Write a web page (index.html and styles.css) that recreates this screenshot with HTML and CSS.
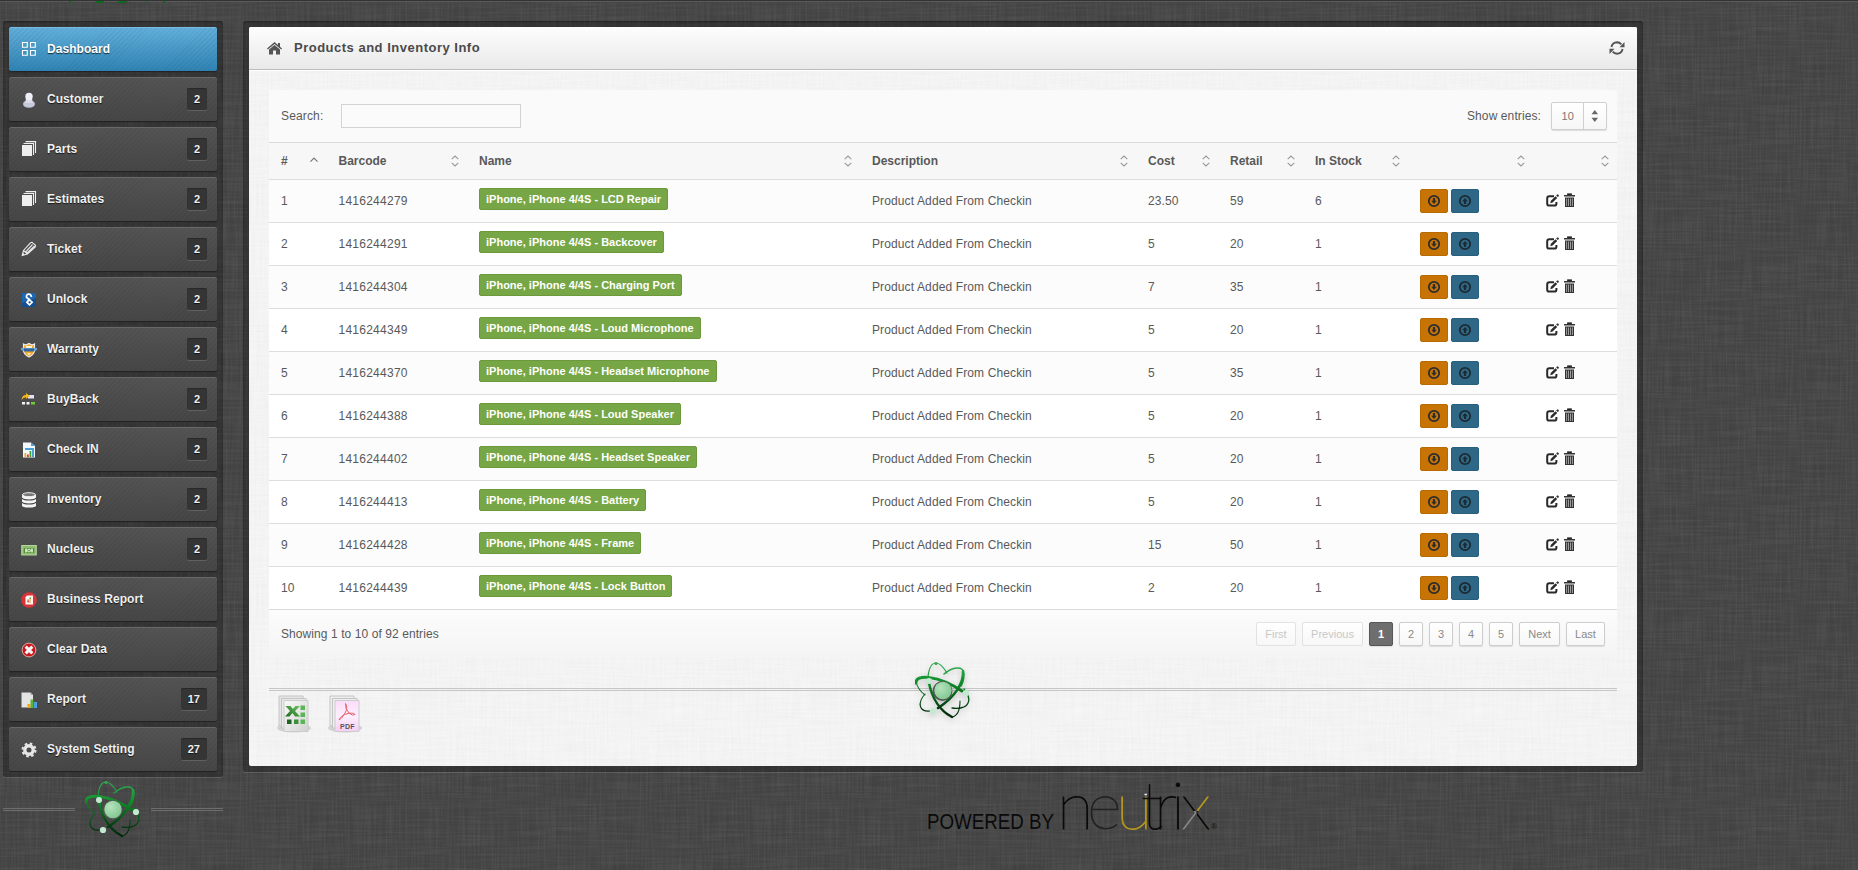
FILE: index.html
```html
<!DOCTYPE html>
<html lang="en">
<head>
<meta charset="utf-8">
<title>Products and Inventory Info</title>
<link rel="stylesheet" href="styles.css">
</head>
<body>
<svg class="defs" width="0" height="0">
  <defs>
    <linearGradient id="gTop" x1="0" y1="0" x2="0" y2="58" gradientUnits="userSpaceOnUse"><stop offset="0" stop-color="#35b25a"/><stop offset=".4" stop-color="#0c8a25"/><stop offset=".8" stop-color="#043a10"/><stop offset="1" stop-color="#02250a"/></linearGradient>
    <radialGradient id="gBall" cx=".35" cy=".35" r=".8"><stop offset="0" stop-color="#b4e3bd"/><stop offset="1" stop-color="#7cc48b"/></radialGradient>
    <linearGradient id="gPage" x1="0" y1="0" x2="1" y2="1"><stop offset="0" stop-color="#fafafa"/><stop offset="1" stop-color="#d2d2d2"/></linearGradient>
    <linearGradient id="gPink" x1="0" y1="0" x2="0" y2="1"><stop offset="0" stop-color="#fbdcfa"/><stop offset=".5" stop-color="#fdf0fd"/><stop offset="1" stop-color="#f7cdf5"/></linearGradient>
    <linearGradient id="gLeaf" x1="0" y1="1" x2="1" y2="0"><stop offset="0" stop-color="#1d6b22"/><stop offset="1" stop-color="#6cc25f"/></linearGradient>
  </defs>
  <symbol id="atom" viewBox="1 0 56 58">
    <g fill="none" stroke="url(#gTop)" stroke-linecap="round">
      <path d="M14 16C15 6 18 2 22 2c4 0 8 5 11 10" stroke-width="1.2"/>
      <path d="M30 13C38 6 50 4 50 13c0 5-1 9-3 12" stroke-width="1.4"/>
      <path d="M49 10c1 12-8 26-25 37" stroke-width="2.6"/>
      <path d="M2 22c-1-9 22-8 46 8" stroke-width="2.9"/>
      <path d="M2 20c1 7 5 11 9 14" stroke-width="1.1"/>
      <path d="M11 33c-8 9-6 18 5 17" stroke-width="1.1"/>
      <path d="M15 22c3 15 11 28 23 34" stroke-width="2.5"/>
      <path d="M38 56c5-1 8-6 8-16" stroke-width="1.1"/>
      <path d="M50 28c4 5 6 10 4 14-2 5-10 6-16 5" stroke-width="1.3"/>
    </g>
    <circle cx="28.500" cy="30" r="10" fill="#4d5550"/><circle cx="29" cy="29.500" r="8.700" fill="url(#gBall)"/>
    <circle cx="22" cy="2.500" r="1.600" fill="#3aa552"/>
    <g fill="#c3ead0"><circle cx="15" cy="20" r="3"/><circle cx="52" cy="32" r="3.100"/><circle cx="19" cy="50" r="3.100"/></g>
  </symbol>
  <symbol id="sort" viewBox="0 0 8 12"><path d="M.7 4.200 4 1l3.300 3.200M.7 7.800 4 11l3.300-3.200" fill="none" stroke="#999" stroke-width="1.100"/></symbol>
  <symbol id="asc" viewBox="0 0 8 12"><path d="M.5 6.700 4 3.200l3.500 3.500" fill="none" stroke="#777" stroke-width="1.200"/></symbol>
  <symbol id="down" viewBox="0 0 14 14"><circle cx="7" cy="7" r="5.200" fill="none" stroke="#2d2d2d" stroke-width="1.800"/><path d="M5.900 4h2.200v2.700h1.700L7 10 4.200 6.700h1.700z" fill="#2d2d2d"/></symbol>
  <symbol id="up" viewBox="0 0 14 14"><circle cx="7" cy="7" r="5.200" fill="none" stroke="#1d2a31" stroke-width="1.800"/><path d="M5.900 10h2.200V7.300h1.700L7 4 4.200 7.300h1.700z" fill="#1d2a31"/></symbol>
  <symbol id="edit" viewBox="0 0 13 13"><path d="M8 2.200H3.400Q1.200 2.200 1.200 4.400v5q0 2.200 2.200 2.200h4.800q2.200 0 2.200-2.200V8" fill="none" stroke="#2a2a2a" stroke-width="2"/><path d="M4.300 9.200l.6-2.400 4.600-4.600 1.700 1.700-4.600 4.600z" fill="#2a2a2a"/><path d="M10.200 1.500l.9-.9q.5-.4 1 0l.6.6q.4.500 0 1l-.9.900z" fill="#2a2a2a"/></symbol>
  <symbol id="trash" viewBox="0 0 11 14"><path d="M0 2h11v1.400H0zM3.200 2V.5h4.600V2M1 4.500h9V14H1z" fill="#333"/><path d="M3.200 1.200h4.600" stroke="#222"/><path d="M2.600 5.500V13M4.500 5.500V13M6.500 5.500V13M8.400 5.500V13" stroke="#aaa" stroke-width=".9"/></symbol>
  <symbol id="stack" viewBox="0 0 16 16"><path d="M1 4h10v11H1z" fill="#eee"/><path d="M2.500 2.500h10V14M4.500.6h10V12" fill="none" stroke="#eee" stroke-width="1.100"/></symbol>
</svg>

<div class="topbar">
  <svg class="topbar-scrap" width="110" height="3"><path d="M9 0h2v2H9zM35 0h9v2h-7zM59 0h9l-4 2h-8zM86 0h1v1h-1zM103 0h2v2h-2z" fill="#0b6b1d"/></svg>
</div>

<div class="layout">
  <aside class="side">
    <nav class="menu">
      <a class="item active"><svg class="ico" viewBox="0 0 16 16"><path d="M1.500 1.500h4.800v4.800H1.500zM9.500 1.500h4.800v4.800H9.500zM1.500 9.500h4.800v4.800H1.500zM9.500 9.500h4.800v4.800H9.500z" fill="none" stroke="#fff" stroke-width="1.100"/></svg><span>Dashboard</span></a>
      <a class="item"><svg class="ico low" viewBox="0 0 16 16"><ellipse cx="8" cy="12" rx="6" ry="3.800" fill="#c6c8dc"/><path d="M4.500 11 5 4q3-6 6 0l.5 7z" fill="#dcdde8"/><circle cx="8" cy="4.500" r="3.700" fill="#eeeef4"/></svg><span>Customer</span><b class="count">2</b></a>
      <a class="item"><svg class="ico"><use href="#stack"/></svg><span>Parts</span><b class="count">2</b></a>
      <a class="item"><svg class="ico"><use href="#stack"/></svg><span>Estimates</span><b class="count">2</b></a>
      <a class="item"><svg class="ico" viewBox="0 0 16 16"><path d="M1.200 14.500 2.500 9.500 9.500 1.800 11 1.300 14.500 4.300 14.300 6 6.500 13zM4 11.500 11.500 3.500M5 12.800 13.500 5M2.600 9.500 6.400 13" fill="none" stroke="#e6e6e6" stroke-width="1.100"/><path d="m1.200 14.500.7-2.700 2 2z" fill="#eee"/></svg><span>Ticket</span><b class="count">2</b></a>
      <a class="item"><svg class="ico low" viewBox="0 0 16 16"><path d="M1 1h14v14H1z" fill="#154f91"/><path d="M1 1h14v5L1 11z" fill="#1f66ae"/><path d="M10.500 5Q10 2 7.500 2.200 5 2.600 5.500 5.200L8.500 8" fill="none" stroke="#fff" stroke-width="1.700"/><path d="m8 6 4.300 4.300L8.500 14 4.800 10.500z" fill="#fff"/><circle cx="8.600" cy="10.300" r="1.100" fill="#154f91"/></svg><span>Unlock</span><b class="count">2</b></a>
      <a class="item"><svg class="ico low" viewBox="0 0 16 16"><path d="M2.500 2 5 3l3-1.500L11 3l2.500-1v6q0 4.500-5.500 7-5.500-2.500-5.500-7z" fill="#f5a62b" stroke="#e9eef5" stroke-width="1.200"/><path d="M5 4h6v3H5zM6 11h4l-2 2.500z" fill="#fff2d0"/><path d="M0 6h16v1.500L14.500 9h-13L0 7.500z" fill="#6fa3d8"/><path d="M3 6.500h10V9.500H3z" fill="#35649d"/></svg><span>Warranty</span><b class="count">2</b></a>
      <a class="item"><svg class="ico low" viewBox="0 0 16 16"><path d="M7 3h6v3.500H7z" fill="#dfe2f8"/><path d="M.5 8Q1 3 5 3V1l4 3.200-4 2.600V5.200Q2.500 5 .5 8z" fill="#f2b61f"/><path d="M1 10h3v2.500H1zM5.500 10h3v2.500h-3z" fill="#f4f4f4"/><path d="M10 10h4v2.500h-4z" fill="#6fc936"/></svg><span>BuyBack</span><b class="count">2</b></a>
      <a class="item"><svg class="ico low" viewBox="0 0 16 16"><path d="M2 .5h8L14 4v11.500H2z" fill="#f3f8fb"/><path d="M10 .5V4h4zM4 6h9v9h-2V8H4z" fill="#4ba3d3"/><path d="M3.500 11h1.800v4H3.500z" fill="#f5a623"/><path d="M6 12.500h1.800V15H6z" fill="#e0382e"/><path d="M8.500 9h1.800v6H8.500z" fill="#42a532"/></svg><span>Check IN</span><b class="count">2</b></a>
      <a class="item"><svg class="ico low" viewBox="0 0 16 16"><path d="M1 2.500v11q0 2 7 2t7-2v-11z" fill="#f4f4f4"/><ellipse cx="8" cy="2.700" rx="6.500" ry="2" fill="#777" stroke="#f4f4f4"/><path d="M1 6q1 2 7 2t7-2M1 10q1 2 7 2t7-2" fill="none" stroke="#444" stroke-width="1.100"/></svg><span>Inventory</span><b class="count">2</b></a>
      <a class="item"><svg class="ico low" viewBox="0 0 16 16"><path d="M.8 3.500h14.400v9.500H.8z" fill="#8dbc6e" stroke="#b5d69d" stroke-width="1.200"/><path d="M2.800 6h10.400v5H2.800z" fill="#55853a"/><path d="M4 6.500h2v4H4zM10 6.500h2v4h-2z" fill="#c9e2b8"/><circle cx="8" cy="8.500" r="1.900" fill="#cfe6bf"/><circle cx="8" cy="8.500" r=".8" fill="#55853a"/></svg><span>Nucleus</span><b class="count">2</b></a>
      <a class="item"><svg class="ico low" viewBox="0 0 16 16"><circle cx="8" cy="8" r="7.800" fill="#d9333a"/><path d="M6 3.500h6v9H4.500V5z" fill="#fdf6ee"/><path d="M6 7h4v4H6z" fill="#e6c9a2"/><path d="M8.500 5.500H10V7H8.500z" fill="#66a33c"/><path d="M6.500 8.500H8V10H6.500z" fill="#cc4b3c"/></svg><span>Business Report</span></a>
      <a class="item"><svg class="ico low" viewBox="0 0 16 16"><circle cx="8" cy="8" r="6.900" fill="#c8171b" stroke="#e0a9a6" stroke-width="1"/><path d="m4.700 4.700 6.600 6.600M11.300 4.700l-6.600 6.600" stroke="#f4f4f4" stroke-width="3.100"/></svg><span>Clear Data</span></a>
      <a class="item"><svg class="ico low" viewBox="0 0 16 16"><path d="M.5.500h9L12 3v12.500H.5z" fill="#e4e4e4"/><path d="M9.500.500V3H12z" fill="#aaa"/><path d="M6.500 12h2.800v4H6.500z" fill="#f4a51c"/><path d="M9.500 7.500h2.800V16H9.500z" fill="#5cb52a"/><path d="M12.700 10H16v6h-3.300z" fill="#4aa0e6"/></svg><span>Report</span><b class="count">17</b></a>
      <a class="item"><svg class="ico low" viewBox="0 0 16 16"><circle cx="8" cy="8" r="4.200" fill="none" stroke="#e6e6e6" stroke-width="3.400"/><circle cx="8" cy="8" r="6.500" fill="none" stroke="#e6e6e6" stroke-width="2" stroke-dasharray="2.600 2.500"/></svg><span>System Setting</span><b class="count">27</b></a>
    </nav>
    <div class="side-rule"><i></i><svg class="side-atom"><use href="#atom"/></svg><i></i></div>
  </aside>

  <main class="main">
    <section class="panel-wrap">
      <div class="panel">
        <header class="panel-head">
          <svg class="home" viewBox="0 0 15 13"><path d="M7.500 0 11 3V1h2v3.800l2 1.700-.8 1L7.500 1.900.8 7.500 0 6.500z"/><path d="M7.500 3 13 7.600V12.500H9V8.500H6v4H2V7.600z"/></svg>
          <h1>Products and Inventory Info</h1>
          <svg class="refresh" viewBox="0 0 16 14"><path d="M2.400 6Q3.500 1.500 8 1.300q2.700 0 4.300 2M13.600 8Q12.500 12.500 8 12.700q-2.700 0-4.300-2" fill="none" stroke="#555" stroke-width="1.900"/><path d="M15.500 1v5.200h-5zM.5 13V7.800h5z" fill="#555"/></svg>
        </header>
        <div class="panel-body">
          <div class="grid-box">
            <div class="tools">
              <label class="search"><span>Search:</span><input type="text"></label>
              <div class="show"><span>Show entries:</span><div class="select"><span>10</span><svg width="22" height="26" viewBox="0 0 22 26"><path d="M11 7l3.300 4.200H7.700zM11 19l3.300-4.200H7.700z" fill="#666"/></svg></div></div>
            </div>
            <table>
              <colgroup><col class="c1"><col class="c2"><col class="c3"><col class="c4"><col class="c5"><col class="c6"><col class="c7"><col class="c8"><col class="c9"></colgroup>
              <thead><tr>
                <th><div>#<svg><use href="#asc"/></svg></div></th>
                <th><div>Barcode<svg><use href="#sort"/></svg></div></th>
                <th><div>Name<svg><use href="#sort"/></svg></div></th>
                <th><div>Description<svg><use href="#sort"/></svg></div></th>
                <th><div>Cost<svg><use href="#sort"/></svg></div></th>
                <th><div>Retail<svg><use href="#sort"/></svg></div></th>
                <th><div>In Stock<svg><use href="#sort"/></svg></div></th>
                <th><div><svg><use href="#sort"/></svg></div></th>
                <th><div><svg><use href="#sort"/></svg></div></th>
              </tr></thead>
              <tbody>
<tr><td>1</td><td class="code">1416244279</td><td><span class="tag">iPhone, iPhone 4/4S - LCD Repair</span></td><td>Product Added From Checkin</td><td>23.50</td><td>59</td><td>6</td><td><div class="btns"><a class="btn out"><svg><use href="#down"/></svg></a><a class="btn in"><svg><use href="#up"/></svg></a></div></td><td><div class="acts"><svg class="edit"><use href="#edit"/></svg><svg class="trash"><use href="#trash"/></svg></div></td></tr>
<tr><td>2</td><td class="code">1416244291</td><td><span class="tag">iPhone, iPhone 4/4S - Backcover</span></td><td>Product Added From Checkin</td><td>5</td><td>20</td><td>1</td><td><div class="btns"><a class="btn out"><svg><use href="#down"/></svg></a><a class="btn in"><svg><use href="#up"/></svg></a></div></td><td><div class="acts"><svg class="edit"><use href="#edit"/></svg><svg class="trash"><use href="#trash"/></svg></div></td></tr>
<tr><td>3</td><td class="code">1416244304</td><td><span class="tag">iPhone, iPhone 4/4S - Charging Port</span></td><td>Product Added From Checkin</td><td>7</td><td>35</td><td>1</td><td><div class="btns"><a class="btn out"><svg><use href="#down"/></svg></a><a class="btn in"><svg><use href="#up"/></svg></a></div></td><td><div class="acts"><svg class="edit"><use href="#edit"/></svg><svg class="trash"><use href="#trash"/></svg></div></td></tr>
<tr><td>4</td><td class="code">1416244349</td><td><span class="tag">iPhone, iPhone 4/4S - Loud Microphone</span></td><td>Product Added From Checkin</td><td>5</td><td>20</td><td>1</td><td><div class="btns"><a class="btn out"><svg><use href="#down"/></svg></a><a class="btn in"><svg><use href="#up"/></svg></a></div></td><td><div class="acts"><svg class="edit"><use href="#edit"/></svg><svg class="trash"><use href="#trash"/></svg></div></td></tr>
<tr><td>5</td><td class="code">1416244370</td><td><span class="tag">iPhone, iPhone 4/4S - Headset Microphone</span></td><td>Product Added From Checkin</td><td>5</td><td>35</td><td>1</td><td><div class="btns"><a class="btn out"><svg><use href="#down"/></svg></a><a class="btn in"><svg><use href="#up"/></svg></a></div></td><td><div class="acts"><svg class="edit"><use href="#edit"/></svg><svg class="trash"><use href="#trash"/></svg></div></td></tr>
<tr><td>6</td><td class="code">1416244388</td><td><span class="tag">iPhone, iPhone 4/4S - Loud Speaker</span></td><td>Product Added From Checkin</td><td>5</td><td>20</td><td>1</td><td><div class="btns"><a class="btn out"><svg><use href="#down"/></svg></a><a class="btn in"><svg><use href="#up"/></svg></a></div></td><td><div class="acts"><svg class="edit"><use href="#edit"/></svg><svg class="trash"><use href="#trash"/></svg></div></td></tr>
<tr><td>7</td><td class="code">1416244402</td><td><span class="tag">iPhone, iPhone 4/4S - Headset Speaker</span></td><td>Product Added From Checkin</td><td>5</td><td>20</td><td>1</td><td><div class="btns"><a class="btn out"><svg><use href="#down"/></svg></a><a class="btn in"><svg><use href="#up"/></svg></a></div></td><td><div class="acts"><svg class="edit"><use href="#edit"/></svg><svg class="trash"><use href="#trash"/></svg></div></td></tr>
<tr><td>8</td><td class="code">1416244413</td><td><span class="tag">iPhone, iPhone 4/4S - Battery</span></td><td>Product Added From Checkin</td><td>5</td><td>20</td><td>1</td><td><div class="btns"><a class="btn out"><svg><use href="#down"/></svg></a><a class="btn in"><svg><use href="#up"/></svg></a></div></td><td><div class="acts"><svg class="edit"><use href="#edit"/></svg><svg class="trash"><use href="#trash"/></svg></div></td></tr>
<tr><td>9</td><td class="code">1416244428</td><td><span class="tag">iPhone, iPhone 4/4S - Frame</span></td><td>Product Added From Checkin</td><td>15</td><td>50</td><td>1</td><td><div class="btns"><a class="btn out"><svg><use href="#down"/></svg></a><a class="btn in"><svg><use href="#up"/></svg></a></div></td><td><div class="acts"><svg class="edit"><use href="#edit"/></svg><svg class="trash"><use href="#trash"/></svg></div></td></tr>
<tr><td>10</td><td class="code">1416244439</td><td><span class="tag">iPhone, iPhone 4/4S - Lock Button</span></td><td>Product Added From Checkin</td><td>2</td><td>20</td><td>1</td><td><div class="btns"><a class="btn out"><svg><use href="#down"/></svg></a><a class="btn in"><svg><use href="#up"/></svg></a></div></td><td><div class="acts"><svg class="edit"><use href="#edit"/></svg><svg class="trash"><use href="#trash"/></svg></div></td></tr>
              </tbody>
            </table>
            <div class="foot">
              <span class="info">Showing 1 to 10 of 92 entries</span>
              <div class="pages">
                <a class="pg w40 off">First</a><a class="pg w61 off">Previous</a><a class="pg cur">1</a><a class="pg">2</a><a class="pg">3</a><a class="pg">4</a><a class="pg">5</a><a class="pg w41">Next</a><a class="pg w39">Last</a>
              </div>
            </div>
          </div>
          <div class="rule"><svg class="rule-atom"><use href="#atom"/></svg></div>
          <div class="exports">
            <svg width="36" height="40" viewBox="0 0 36 40"><ellipse cx="18" cy="34" rx="17" ry="4.500" fill="#000" opacity=".13"/><path d="M3 2h24v30H3z" fill="#e6e6e6" stroke="#c4c4c4"/><path d="M5.500 4.500H30V34H5.500z" fill="#e9e9e9" stroke="#c4c4c4"/><path d="M8 6.500h24V37.500H8z" fill="url(#gPage)" stroke="#ccc"/><path d="M9.500 12h5l2.500 3 2.500-3H24l-5 5 5 5.500h-5L16.500 19l-3 3.500H9l5-5.500z" fill="url(#gLeaf)"/><path d="M24.500 11.500H29V16h-4.500zM24.500 18.500H29V23h-4.500zM24.500 25.500H29V30h-4.500z" fill="#5cb555"/><path d="M18 25.500h4.500V30H18z" fill="#3d8f3c"/><path d="M11 25.500h4.500V30H11z" fill="#1d6423"/></svg>
            <svg width="36" height="40" viewBox="0 0 36 40"><ellipse cx="18" cy="34" rx="17" ry="4.500" fill="#000" opacity=".13"/><path d="M3 2h24v30H3z" fill="#eee" stroke="#c4c4c4"/><path d="M5.500 4.500H30V34H5.500z" fill="#eee" stroke="#c4c4c4"/><path d="M8 6.500h24V37.500H8z" fill="url(#gPink)" stroke="#ccc"/><path d="M18.500 9.500q3 4-1 10.500-3 5-5.500 6 2-5 9-6.500 6-1 7 1-2 2-6-1.500-4-4-3.500-9.500" fill="none" stroke="#e8626c" stroke-width="1"/><text x="13" y="34.500" textLength="14.500" class="pdf">PDF</text></svg>
          </div>
        </div>
      </div>
    </section>
    <footer class="powered">
      <svg width="310" height="86" viewBox="0 -20 310 86">
        <defs><pattern id="xfill" patternUnits="userSpaceOnUse" x="253" y="0" width="40" height="60"><path d="M0 0h40v60H0z" fill="#0a0a0a"/><path d="M15.500 0H40v32H15.500z" fill="#b4961e"/><path d="M0 32h15.500v28H0z" fill="#858585"/></pattern></defs>
        <text x="-1" y="50" class="by" textLength="127" lengthAdjust="spacingAndGlyphs">POWERED BY</text>
        <text class="brand n" x="129" y="50">n</text>
        <text class="brand e" x="159" y="50">e</text>
        <text class="brand u" x="188" y="50">u</text>
        <text class="brand n" x="213" y="50">t</text>
        <text class="brand n" x="226" y="50">r</text>
        <text class="brand n" x="243" y="50">i</text>
        <text class="brand x" x="253" y="50">x</text>
        <path d="M216.500 15.500h2.500" stroke="#eee" stroke-width="1.500"/>
        <text x="283" y="50" class="reg">®</text>
      </svg>
    </footer>
  </main>
</div>
</body>
</html>
```
FILE: styles.css
```css
* { box-sizing: border-box; }
body {
  margin: 0;
  height: 870px;
  overflow: hidden;
  font: 12px/18px "Liberation Sans", Arial, sans-serif;
  color: #595959;
  background-color: #424242;
  background-image: url("data:image/svg+xml,%3Csvg xmlns='http://www.w3.org/2000/svg' width='400' height='400'%3E%3Cfilter id='h' x='0' y='0' width='1' height='1'%3E%3CfeTurbulence type='fractalNoise' baseFrequency='.02 .5' numOctaves='2' stitchTiles='stitch'/%3E%3CfeColorMatrix values='0 0 0 0 1 0 0 0 0 1 0 0 0 0 1 .8 0 0 0 -.3'/%3E%3C/filter%3E%3Cfilter id='v' x='0' y='0' width='1' height='1'%3E%3CfeTurbulence type='fractalNoise' baseFrequency='.5 .02' numOctaves='2' seed='4' stitchTiles='stitch'/%3E%3CfeColorMatrix values='0 0 0 0 1 0 0 0 0 1 0 0 0 0 1 .8 0 0 0 -.3'/%3E%3C/filter%3E%3Crect width='400' height='400' filter='url(%23h)' opacity='.13'/%3E%3Crect width='400' height='400' filter='url(%23v)' opacity='.13'/%3E%3C/svg%3E");
}
.defs { position: absolute; }
.topbar { height: 21px; border-top: 1px solid #333; box-shadow: inset 0 1px #5a5a5a; }
.topbar-scrap { display: block; margin-left: 60px; }
.layout { display: flex; gap: 20px; padding-left: 3px; }

.side { width: 220px; }
.menu {
  display: flex; flex-direction: column; gap: 6px;
  padding: 6px; border-radius: 3px;
  background: rgba(0, 0, 0, .25);
  box-shadow: inset 0 1px 2px rgba(0, 0, 0, .35), 0 1px rgba(255, 255, 255, .12);
}
.item {
  display: flex; align-items: center;
  height: 44px; padding: 0 10px 0 12px; border-radius: 2px;
  color: #f0f0f0; font-weight: bold; text-shadow: 0 1px 1px rgba(0, 0, 0, .7);
  background: repeating-linear-gradient(135deg, rgba(0, 0, 0, .05) 0 1px, transparent 1px 3.5px), linear-gradient(#545454, #464646);
  box-shadow: inset 0 1px #686868, 0 1px 1px #222;
}
.item.active {
  color: #fff;
  background: repeating-linear-gradient(135deg, rgba(0, 0, 0, .05) 0 1px, transparent 1px 3.5px), linear-gradient(#62afdb, #2f83b3);
  box-shadow: inset 0 1px #79bce2, 0 1px 1px #222;
}
.item span { flex: 1; letter-spacing: .06px; }
.ico { width: 16px; height: 16px; margin-right: 10px; }
.ico.low { margin-top: 2px; }
.count {
  min-width: 20px; height: 22px; padding: 0 7px; border-radius: 2px;
  font-size: 11px; line-height: 22px; text-align: center;
  background: #353535; box-shadow: inset 0 1px 1px #292929, 0 1px #606060;
}
.side-rule { display: flex; align-items: center; height: 64px; }
.side-rule i { flex: 1; height: 3px; border: solid #6d6d6d; border-width: 1px 0; }
.side-atom { width: 56px; height: 58px; margin: 0 10px; }

.main { width: 1400px; }
.panel-wrap {
  padding: 6px; border-radius: 3px; background: rgba(0, 0, 0, .25);
  box-shadow: inset 0 1px 2px rgba(0, 0, 0, .35), 0 1px rgba(255, 255, 255, .12);
}
.panel {
  height: 739px; border-radius: 2px; overflow: hidden; background-color: #f6f6f6;
  background-image: url("data:image/svg+xml,%3Csvg xmlns='http://www.w3.org/2000/svg' width='400' height='400'%3E%3Cfilter id='h' x='0' y='0' width='1' height='1'%3E%3CfeTurbulence type='fractalNoise' baseFrequency='.02 .5' numOctaves='2' stitchTiles='stitch'/%3E%3CfeColorMatrix values='0 0 0 0 0 0 0 0 0 0 0 0 0 0 0 .8 0 0 0 -.3'/%3E%3C/filter%3E%3Cfilter id='v' x='0' y='0' width='1' height='1'%3E%3CfeTurbulence type='fractalNoise' baseFrequency='.5 .02' numOctaves='2' seed='4' stitchTiles='stitch'/%3E%3CfeColorMatrix values='0 0 0 0 0 0 0 0 0 0 0 0 0 0 0 .8 0 0 0 -.3'/%3E%3C/filter%3E%3Crect width='400' height='400' filter='url(%23h)' opacity='.04'/%3E%3Crect width='400' height='400' filter='url(%23v)' opacity='.04'/%3E%3C/svg%3E");
}
.panel-head {
  display: flex; align-items: center; height: 43px; padding: 0 12px 0 18px;
  background: linear-gradient(#fdfdfd, #e9e9e9); border-bottom: 1px solid #bcbcbc;
  box-shadow: 0 1px #fff;
}
.panel-head h1 { flex: 1; margin: 0; font-size: 13px; color: #4a4a4a; letter-spacing: .5px; }
.home { width: 15px; height: 13px; margin-right: 12px; fill: #555; }
.refresh { width: 16px; height: 14px; }
.panel-body { padding: 20px 20px 0; }
.grid-box { background: #fafafa; }
.tools { display: flex; justify-content: space-between; align-items: center; height: 52px; padding: 0 10px 0 12px; }
.search { display: flex; align-items: center; gap: 18px; letter-spacing: .15px; }
.search input { width: 180px; height: 24px; border: 1px solid #d3d3d3; background: #fbfbfb; padding: 0 6px; }
.show { display: flex; align-items: center; gap: 10px; letter-spacing: .1px; }
.select {
  display: flex; width: 56px; height: 28px; border: 1px solid #cfcfcf; border-radius: 2px;
  background: linear-gradient(#fff, #f6f6f6); box-shadow: 0 1px 1px #ddd;
}
.select > span { width: 33px; border-right: 1px solid #cfcfcf; text-align: center; font-size: 11px; line-height: 27px; color: #777; }

table { width: 100%; table-layout: fixed; border-collapse: separate; border-spacing: 0; }
.c1 { width: 57.5px; } .c2 { width: 140.5px; } .c3 { width: 393px; } .c4 { width: 276px; } .c5 { width: 82px; }
.c6 { width: 85px; } .c7 { width: 105px; } .c8 { width: 125px; } .c9 { width: 84px; }
th { height: 37px; padding: 0 8.5px 0 12px; text-align: left; background: #f7f7f7; border-top: 1px solid #dadada; }
th > div { display: flex; align-items: center; justify-content: space-between; height: 36px; }
th svg { width: 8px; height: 12px; margin-left: auto; }
td { height: 43px; padding: 0 0 0 12px; border-top: 1px solid #dedede; background: #fcfcfc; letter-spacing: .12px; }
tr:nth-child(even) td { background: #fff; }
td.code { letter-spacing: .25px; }
.tag {
  display: block; width: max-content; height: 22px; margin-bottom: 4px; padding: 0 6px;
  border: 1px solid #6b993b; border-radius: 2px; background: #76a645;
  font-size: 11px; font-weight: bold; line-height: 20px; letter-spacing: .01px; color: #fff;
}
.btns { display: flex; gap: 3px; }
.btn { display: flex; align-items: center; justify-content: center; width: 28px; height: 24px; border-radius: 2px; }
.btn svg { width: 14px; height: 14px; }
.out { background: #c77405; border: 1px solid #b96b03; }
.in { background: #2e6886; border: 1px solid #295f7c; }
.acts { display: flex; align-items: center; gap: 5px; padding-left: 1px; }
.edit { width: 13px; height: 13px; margin-top: -1px; }
.trash { width: 11px; height: 14px; margin-top: -3px; }

.foot {
  display: flex; justify-content: space-between; height: 49px; padding: 12px 12px 0;
  border-top: 1px solid #dadada; background: linear-gradient(#fcfcfc, #f4f4f4);
}
.info { line-height: 24px; letter-spacing: .08px; }
.pages { display: flex; gap: 6px; }
.pg {
  width: 24px; height: 24px; border: 1px solid #cdcdcd; border-radius: 2px;
  font-size: 11px; line-height: 22px; text-align: center; color: #8a8a8a;
  background: linear-gradient(#fff, #f7f7f7); box-shadow: 0 1px 1px #ddd;
}
.w40 { width: 40px; } .w61 { width: 61px; } .w41 { width: 41px; } .w39 { width: 39px; }
.off { color: #c8c8c8; border-color: #e2e2e2; box-shadow: none; }
.cur { color: #fff; font-weight: bold; background: #6e6e6e; border-color: #565656; }

.rule { position: relative; height: 3px; margin-top: 30px; border: solid #c6c6c6; border-width: 1px 0; }
.rule-atom { position: absolute; left: 646px; top: -28px; width: 56px; height: 58px; filter: drop-shadow(0 2px 3px rgba(0, 0, 0, .2)); }
.exports { display: flex; gap: 15px; padding: 3px 0 0 7px; }
.pdf { font: bold 7px "Liberation Sans", Arial, sans-serif; fill: #555; }

.powered { margin-top: -13px; padding-left: 685px; }
.by { font: 22px "Liberation Sans", Arial, sans-serif; fill: #0a0a0a; }
.brand { font: 100 67px Lato, sans-serif; stroke-width: .9px; }
.n { fill: #0a0a0a; stroke: #0a0a0a; }
.e { fill: #222; stroke: #222; }
.u { fill: #b4961e; stroke: #b4961e; }
.x { fill: url(#xfill); stroke: url(#xfill); }
.reg { font: 8px "Liberation Sans", Arial, sans-serif; fill: #0a0a0a; }
```
